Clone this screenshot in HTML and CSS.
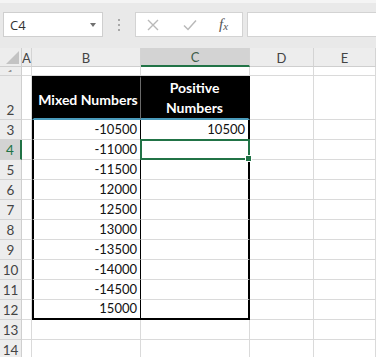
FILE: index.html
```html
<!DOCTYPE html>
<html>
<head>
<meta charset="utf-8">
<link rel="stylesheet" href="styles.css">
</head>
<body>
<div class="app">
  <div class="toolbar">
    <div class="namebox"><span class="nb-text">C4</span><span class="nb-arrow"></span></div>
    <div class="grip"><i></i><i></i><i></i></div>
    <div class="fbuttons">
      <svg class="ic" width="12" height="12" viewBox="0 0 12 12"><path d="M1 1L11 11M11 1L1 11" stroke="#b9b9b9" stroke-width="1.4" fill="none"/></svg>
      <svg class="ic" width="14" height="12" viewBox="0 0 14 12"><path d="M1 6.5L5 10.5L13 1.5" stroke="#b9b9b9" stroke-width="1.5" fill="none"/></svg>
      <span class="fx">f<sub>x</sub></span>
    </div>
    <div class="finput"></div>
  </div>

  <div class="sheet">
    <!-- header row -->
    <div class="corner"><span class="tri"></span></div>
    <div class="ch">A</div>
    <div class="ch">B</div>
    <div class="ch sel">C</div>
    <div class="ch">D</div>
    <div class="ch">E</div>

    <!-- row 1 -->
    <div class="rh r1"><span>1</span></div>
    <div class="c"></div><div class="c"></div><div class="c"></div><div class="c"></div><div class="c"></div>

    <!-- row 2 -->
    <div class="rh">2</div>
    <div class="c"></div>
    <div class="c th thb">Mixed Numbers</div>
    <div class="c th thc">Positive<br>Numbers</div>
    <div class="c"></div><div class="c"></div>

    <div class="rh">3</div>
    <div class="c"></div><div class="c tb first">-10500</div><div class="c tc first">10500</div><div class="c"></div><div class="c"></div>

    <div class="rh rsel">4</div>
    <div class="c"></div><div class="c tb">-11000</div><div class="c tc active"></div><div class="c"></div><div class="c"></div>

    <div class="rh">5</div>
    <div class="c"></div><div class="c tb">-11500</div><div class="c tc"></div><div class="c"></div><div class="c"></div>

    <div class="rh">6</div>
    <div class="c"></div><div class="c tb">12000</div><div class="c tc"></div><div class="c"></div><div class="c"></div>

    <div class="rh">7</div>
    <div class="c"></div><div class="c tb">12500</div><div class="c tc"></div><div class="c"></div><div class="c"></div>

    <div class="rh">8</div>
    <div class="c"></div><div class="c tb">13000</div><div class="c tc"></div><div class="c"></div><div class="c"></div>

    <div class="rh">9</div>
    <div class="c"></div><div class="c tb">-13500</div><div class="c tc"></div><div class="c"></div><div class="c"></div>

    <div class="rh">10</div>
    <div class="c"></div><div class="c tb">-14000</div><div class="c tc"></div><div class="c"></div><div class="c"></div>

    <div class="rh">11</div>
    <div class="c"></div><div class="c tb">-14500</div><div class="c tc"></div><div class="c"></div><div class="c"></div>

    <div class="rh">12</div>
    <div class="c"></div><div class="c tb last">15000</div><div class="c tc last"></div><div class="c"></div><div class="c"></div>

    <div class="rh">13</div>
    <div class="c"></div><div class="c"></div><div class="c"></div><div class="c"></div><div class="c"></div>

    <div class="rh">14</div>
    <div class="c"></div><div class="c"></div><div class="c"></div><div class="c"></div><div class="c"></div>
  </div>
</div>
</body>
</html>
```

FILE: styles.css
```css
* { box-sizing: border-box; }
html, body { margin: 0; padding: 0; }
body {
  width: 376px;
  height: 357px;
  overflow: hidden;
  background: #ffffff;
  font-family: Lato, "Open Sans", sans-serif;
}
.app { width: 376px; }

.toolbar {
  height: 48px;
  background: #e9e9e9;
  border-top: 3px solid #f4f4f4;
  display: flex;
  align-items: flex-start;
  padding: 9px 0 0 3px;
}
.namebox {
  width: 100px;
  height: 25px;
  background: #fff;
  border: 1px solid #cfcfcf;
  display: flex;
  align-items: center;
  justify-content: space-between;
  padding: 0 6px 0 6px;
}
.nb-text { font-size: 13px; color: #333; font-family: "Open Sans", sans-serif; }
.nb-arrow {
  width: 0; height: 0;
  border-left: 3.5px solid transparent;
  border-right: 3.5px solid transparent;
  border-top: 4px solid #707070;
}
.grip {
  width: 32px;
  height: 25px;
  display: flex;
  flex-direction: column;
  align-items: center;
  justify-content: center;
  gap: 3px;
}
.grip i { display: block; width: 2px; height: 2px; background: #a8a8a8; }
.fbuttons {
  width: 108px;
  height: 25px;
  background: #fff;
  border: 1px solid #d3d3d3;
  display: flex;
  align-items: center;
  padding-left: 11px;
}
.fbuttons .ic { display: block; }
.fbuttons .ic + .ic { margin-left: 24px; }
.fx {
  margin-left: 22px;
  font-family: "Liberation Serif", serif;
  font-style: italic;
  font-size: 15px;
  color: #555;
  line-height: 1;
}
.fx sub { font-size: 11px; vertical-align: -1px; }
.finput {
  margin-left: 4px;
  flex: 1;
  height: 25px;
  background: #fff;
  border: 1px solid #d3d3d3;
  border-right: none;
}

.sheet {
  display: grid;
  grid-template-columns: 22px 10px 109px 109px 64px 62px;
  grid-template-rows: 19px 9px 44px repeat(12, 20px);
}

.corner {
  background: #ededed;
  border-right: 1px solid #cfcfcf;
  border-bottom: 1px solid #cfcfcf;
  position: relative;
}
.corner .tri {
  position: absolute;
  right: 2px;
  bottom: 2px;
  width: 0; height: 0;
  border-left: 13px solid transparent;
  border-bottom: 13px solid #c3c3c3;
}
.ch {
  background: #ededed;
  border-right: 1px solid #d4d4d4;
  border-bottom: 1px solid #cfcfcf;
  font-size: 13px;
  color: #444;
  display: flex;
  align-items: center;
  justify-content: center;
  padding-top: 1px;
}
.ch.sel {
  background: #d3d3d3;
  border-bottom: 2px solid #217346;
  color: #3d5c4a;
}

.rh {
  background: #ededed;
  border-right: 1px solid #cfcfcf;
  border-bottom: 1px solid #d4d4d4;
  font-size: 13.5px;
  color: #444;
  display: flex;
  align-items: flex-end;
  justify-content: center;
  padding-bottom: 2px;
  line-height: 1;
}
.rh.r1 { overflow: hidden; align-items: flex-start; padding: 1px 0 0 0; }
.rh.r1 span { display: block; height: 4px; overflow: hidden; font-size: 11px; color: #888; }
.rh.rsel {
  background: #d3d3d3;
  border-right: 2px solid #217346;
  color: #217346;
}

.c {
  border-right: 1px solid #dadada;
  border-bottom: 1px solid #dadada;
  font-size: 13px;
  color: #111;
  display: flex;
  align-items: flex-end;
  justify-content: flex-end;
  padding: 0 3px 3px 0;
  line-height: 1;
}

.th {
  background: #000;
  color: #fff;
  font-weight: bold;
  font-size: 14px;
  border-top: 2px solid #000;
  border-bottom: 2px solid #4a9bbb;
}
.thb {
  border-left: 2px solid #000;
  border-right: 1px solid #6a6a6a;
  justify-content: center;
  padding: 0 0 11px 2px;
}
.thc {
  border-right: 2px solid #000;
  justify-content: center;
  text-align: center;
  line-height: 20px;
  padding: 0 0 0 0;
  align-items: center;
}

.tb {
  border-left: 2px solid #000;
  border-right: 1px solid #000;
}
.tc {
  border-right: 2px solid #000;
}
.last { border-bottom: 2px solid #000; }

.active { position: relative; overflow: visible; }
.active::after {
  content: "";
  position: absolute;
  left: -1px;
  top: -1px;
  right: -2px;
  bottom: -1px;
  border: 2px solid #217346;
}
.active::before {
  content: "";
  position: absolute;
  right: -4px;
  bottom: -3px;
  width: 5px;
  height: 5px;
  background: #217346;
  border: 1px solid #fff;
  z-index: 2;
}
```
